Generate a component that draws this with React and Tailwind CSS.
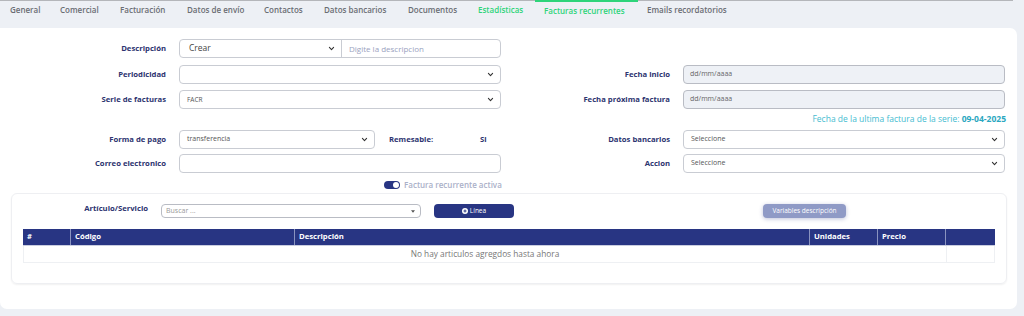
import React from "react";

const tabs = [
  ["General", "w-[50px]"],
  ["Comercial", "w-[60px]"],
  ["Facturación", "w-[67px]"],
  ["Datos de envío", "w-[77px]"],
  ["Contactos", "w-[60px]"],
  ["Datos bancarios", "w-[84px]"],
  ["Documentos", "w-[70px]"],
  ["Estadísticas", "w-[66px]"],
  ["Facturas recurrentes", "w-[103px]"],
  ["Emails recordatorios", "w-[110px]"],
];

function Chevron({ className = "" }) {
  return (
    <svg viewBox="0 0 10 10" className={"w-[7px] h-[7px] " + className}>
      <path d="M2 3.5 L5 6.5 L8 3.5" fill="none" stroke="#333" strokeWidth="1.6" strokeLinecap="round" strokeLinejoin="round" />
    </svg>
  );
}

function Select({ text, w = "w-[322px]", textCls = "text-[7px] text-[#555]" }) {
  return (
    <div className={`${w} h-[19px] border border-[#c9ccd3] rounded-[4px] bg-white flex items-center justify-between pl-[7px] pr-[6px]`}>
      <span className={textCls}>{text}</span>
      <Chevron />
    </div>
  );
}

function Label({ children, w = "w-[166px]" }) {
  return (
    <div className={`${w} shrink-0 text-right text-[7.7px] font-bold text-[#2d3470] whitespace-nowrap`}>{children}</div>
  );
}

export default function App() {
  return (
    <div className="w-[1024px] h-[316px] bg-[#edf0f5] overflow-hidden" style={{ fontFamily: '"Open Sans", "Noto Sans", sans-serif' }}>
      {/* Tabs */}
      <div className="flex h-[28px] w-[1013px] border-t border-[#b4b6ba]">
        {tabs.map(([t, w], i) => {
          const active = t === "Facturas recurrentes";
          const green = active || t === "Estadísticas";
          return (
            <div
              key={t}
              className={`${w} shrink-0 pl-[9px] pt-[3px] text-[8px] font-semibold whitespace-nowrap ${active ? "border-t-2 border-[#2ed47a] -mt-px pt-[2px]" : ""} ${green ? "text-[#2ed47a]" : "text-[#6a6d73]"}`}
              style={i === 0 ? { marginLeft: 1 } : undefined}
            >
              {t}
            </div>
          );
        })}
      </div>

      {/* Main card */}
      <div className="w-[1017px] h-[281px] bg-white rounded-r-[7px] rounded-bl-[7px] pt-[11px]">
        {/* Row 1 */}
        <div className="flex items-center h-[19px]">
          <Label>Descripción</Label>
          <div className="ml-[13px] w-[322px] h-[19px] border border-[#c9ccd3] rounded-[4px] flex">
            <div className="w-[162px] flex items-center justify-between pl-[9px] pr-[6px] border-r border-[#c9ccd3]">
              <span className="text-[8.5px] text-[#444]">Crear</span>
              <Chevron />
            </div>
            <div className="flex items-center pl-[7px] text-[8px] text-[#9aa2c0]">Digite la descripcion</div>
          </div>
        </div>

        {/* Row 2 */}
        <div className="flex items-center h-[19px] mt-[7px]">
          <Label>Periodicidad</Label>
          <div className="ml-[13px]"><Select text="" /></div>
          <Label w="w-[169px]">Fecha inicio</Label>
          <div className="ml-[13px] w-[322px] h-[19px] border border-[#b9bcc4] rounded-[4px] bg-[#eef1f6] flex items-center pl-[6px] text-[7px] text-[#666]">dd/mm/aaaa</div>
        </div>

        {/* Row 3 */}
        <div className="flex items-center h-[19px] mt-[6px]">
          <Label>Serie de facturas</Label>
          <div className="ml-[13px]"><Select text="FACR" textCls="text-[6.5px] text-[#555]" /></div>
          <Label w="w-[169px]">Fecha próxima factura</Label>
          <div className="ml-[13px] w-[322px] h-[19px] border border-[#b9bcc4] rounded-[4px] bg-[#eef1f6] flex items-center pl-[6px] text-[7px] text-[#666]">dd/mm/aaaa</div>
        </div>

        {/* Last invoice date */}
        <div className="w-[1006px] text-right text-[8.5px] text-[#45bcd0] mt-[5px] leading-[10px]">
          Fecha de la ultima factura de la serie: <span className="font-bold text-[#2aa7c0]">09-04-2025</span>
        </div>

        {/* Row 4 */}
        <div className="flex items-center h-[19px] mt-[6px]">
          <Label>Forma de pago</Label>
          <div className="ml-[13px]"><Select text="transferencia" w="w-[196px]" /></div>
          <div className="w-[105px] shrink-0 pl-[14px] text-[7.7px] font-bold text-[#2d3470]">Remesable:</div>
          <div className="w-[21px] shrink-0 text-[7.7px] font-bold text-[#2d3470]">Si</div>
          <Label w="w-[169px]">Datos bancarios</Label>
          <div className="ml-[13px]"><Select text="Seleccione" /></div>
        </div>

        {/* Row 5 */}
        <div className="flex items-center h-[19px] mt-[5px]">
          <Label>Correo electronico</Label>
          <div className="ml-[13px] w-[322px] h-[19px] border border-[#c9ccd3] rounded-[4px]" />
          <Label w="w-[169px]">Accion</Label>
          <div className="ml-[13px]"><Select text="Seleccione" /></div>
        </div>

        {/* Toggle */}
        <div className="flex items-center h-[10px] mt-[7px] pl-[384px]">
          <div className="w-[16px] h-[8px] rounded-full bg-[#283583] flex items-center justify-end pr-[1px]">
            <div className="w-[6px] h-[6px] rounded-full bg-white" />
          </div>
          <span className="ml-[4px] text-[8px] font-semibold text-[#aab0c8] whitespace-nowrap">Factura recurrente activa</span>
        </div>

        {/* Inner card */}
        <div className="ml-[11px] mt-[3px] w-[996px] h-[91px] rounded-[6px] border border-[#eeeff2] shadow-[0_1px_2px_rgba(0,0,0,0.06)] pt-[10px]">
          <div className="flex items-center h-[14px]">
            <div className="w-[136px] text-right text-[7.7px] font-bold text-[#2d3470] -mt-[4px]">Artículo/Servicio</div>
            <div className="ml-[13px] w-[260px] h-[14px] border border-[#b9bcc4] rounded-[4px] flex items-center justify-between pl-[4px] pr-[5px]">
              <span className="text-[7px] text-[#999]">Buscar ...</span>
              <svg viewBox="0 0 6 4" className="w-[4px] h-[3px]"><path d="M0 0 L6 0 L3 4 Z" fill="#555" /></svg>
            </div>
            <div className="ml-[13px] w-[80px] h-[14px] rounded-[4px] bg-[#283583] flex items-center justify-center gap-[2px] text-white text-[6.5px]">
              <svg viewBox="0 0 10 10" className="w-[6px] h-[6px]">
                <circle cx="5" cy="5" r="5" fill="white" />
                <path d="M5 2.5 V7.5 M2.5 5 H7.5" stroke="#283583" strokeWidth="1.6" />
              </svg>
              <span>Línea</span>
            </div>
            <div className="ml-[249px] w-[83px] h-[14px] rounded-[4px] bg-[#8f9ac6] shadow-[0_1px_4px_rgba(40,53,131,0.3)] flex items-center justify-center text-white text-[6.5px]">
              Variables descripción
            </div>
          </div>

          <div className="ml-[11px] mt-[11px] w-[972px]">
            <div className="flex h-[17px] bg-[#283583] text-white text-[7.7px] font-bold items-center border-b border-[#c9cde0]">
              <div className="w-[48px] pl-[4px] h-full flex items-center border-r border-[#8a93c0]">#</div>
              <div className="w-[224px] pl-[4px] h-full flex items-center border-r border-[#8a93c0]">Código</div>
              <div className="w-[515px] pl-[4px] h-full flex items-center border-r border-[#8a93c0]">Descripción</div>
              <div className="w-[68px] pl-[4px] h-full flex items-center border-r border-[#8a93c0]">Unidades</div>
              <div className="w-[68px] pl-[4px] h-full flex items-center border-r border-[#8a93c0]">Precio</div>
              <div className="flex-1" />
            </div>
            <div className="flex h-[17px] border-b border-x border-[#eef0f3]">
              <div className="w-[923px] flex items-center justify-center text-[8.3px] text-[#777] border-r border-[#eef0f3]">
                No hay articulos agregdos hasta ahora
              </div>
              <div className="flex-1" />
            </div>
          </div>
        </div>
      </div>
    </div>
  );
}
